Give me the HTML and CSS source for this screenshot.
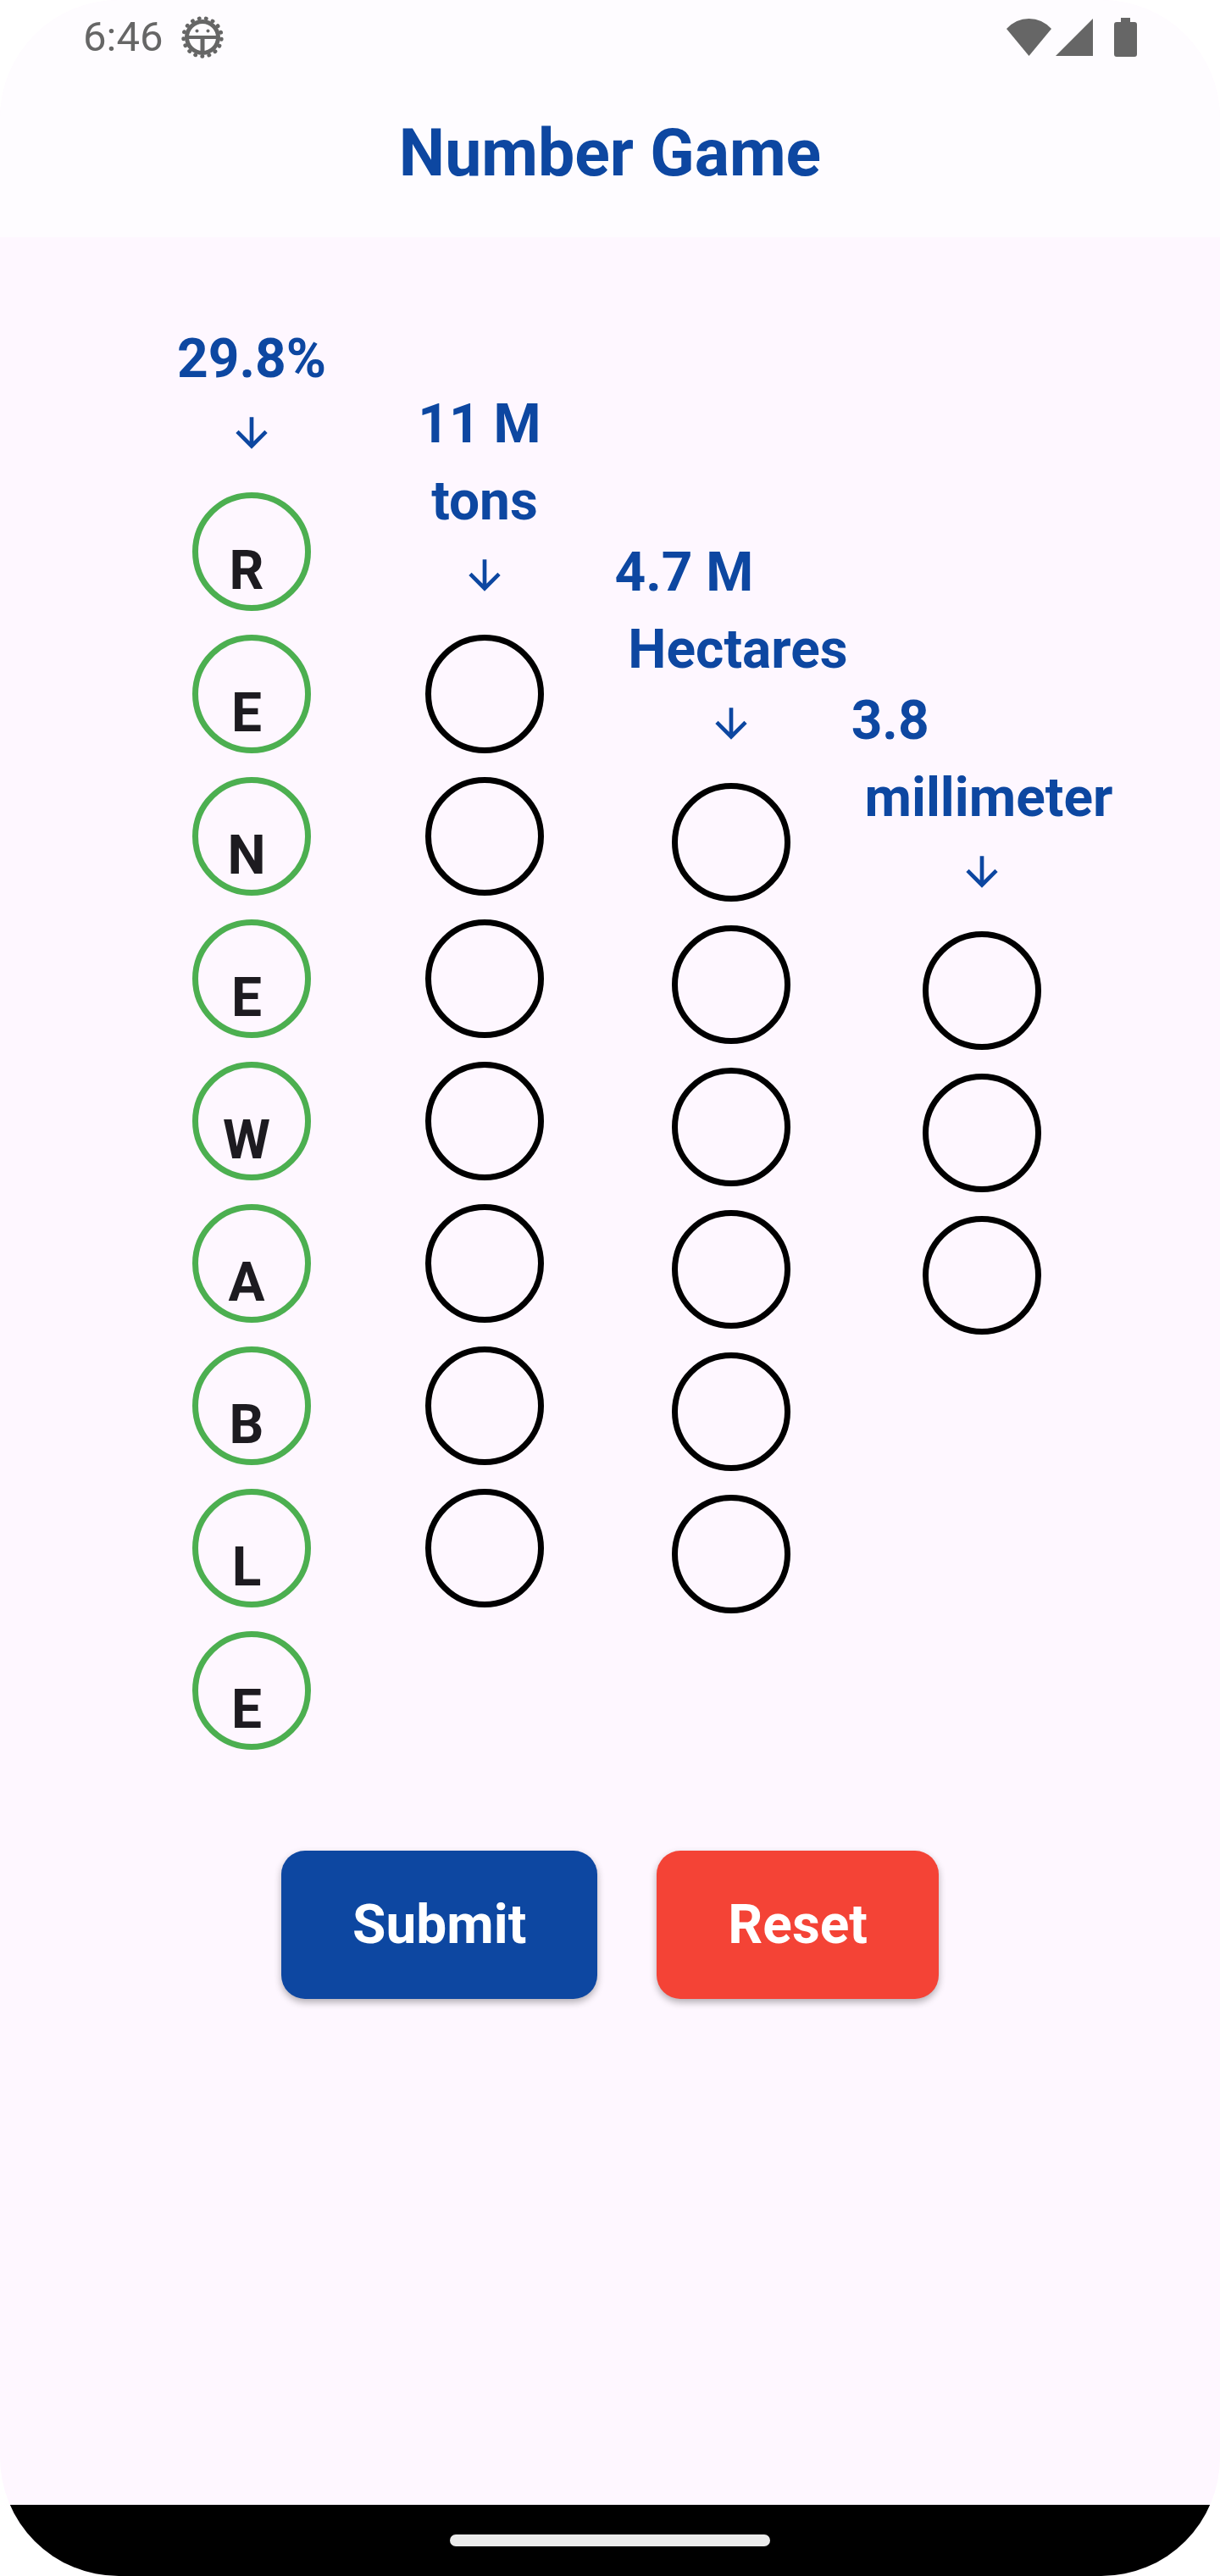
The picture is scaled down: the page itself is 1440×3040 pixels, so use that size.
FILE: index.html
```html
<!DOCTYPE html>
<html lang="en">
<head>
<meta charset="utf-8">
<meta name="viewport" content="width=device-width, initial-scale=1">
<title>Number Game</title>
<link rel="stylesheet" href="styles.css">
</head>
<body>
<div class="screen">
  <header class="top">
    <div class="status">
      <span class="clock">6:46</span>
      <svg class="gear" viewBox="0 0 50 50" aria-hidden="true">
        <circle cx="25" cy="25" r="18.500" fill="none" stroke="currentColor" stroke-width="5"/>
        <circle cx="25" cy="25" r="22.500" fill="none" stroke="currentColor" stroke-width="4.500" stroke-linecap="round" pathLength="170" stroke-dasharray="0.600 9.400" transform="rotate(90 25 25)"/>
        <path d="M9 23h32v4H27.500v15h-5V27H9z" fill="currentColor"/>
        <circle cx="18.500" cy="17.500" r="2" fill="currentColor"/>
        <circle cx="31.500" cy="17.500" r="2" fill="currentColor"/>
      </svg>
      <span class="spacer"></span>
      <svg class="wifi" viewBox="0 0 53 44" aria-hidden="true"><path d="M0 12Q11 0 26.500 0T53 12L26.500 44z" fill="currentColor"/></svg>
      <svg class="signal" viewBox="0 0 44 44" aria-hidden="true"><path d="M44 0v44H0z" fill="currentColor"/></svg>
      <svg class="battery" viewBox="0 0 27 46" aria-hidden="true"><path d="M8 0h11v5h5q3 0 3 3v35q0 3-3 3H3q-3 0-3-3V8q0-3 3-3h5z" fill="currentColor"/></svg>
    </div>
    <h1 class="title">Number Game</h1>
  </header>

  <main class="game">
    <form class="form">
      <div class="board">
        <section class="column">
          <h2 class="clue">29.8%</h2>
          <svg class="arrow" viewBox="0 0 24 24" aria-hidden="true"><path d="M20 12l-1.410-1.410L13 16.170V4h-2v12.170l-5.580-5.590L4 12l8 8z" fill="currentColor"/></svg>
          <div class="cells">
            <input class="cell correct" type="text" maxlength="1" aria-label="29.8%, letter 1" value="R">
            <input class="cell correct" type="text" maxlength="1" aria-label="29.8%, letter 2" value="E">
            <input class="cell correct" type="text" maxlength="1" aria-label="29.8%, letter 3" value="N">
            <input class="cell correct" type="text" maxlength="1" aria-label="29.8%, letter 4" value="E">
            <input class="cell correct" type="text" maxlength="1" aria-label="29.8%, letter 5" value="W">
            <input class="cell correct" type="text" maxlength="1" aria-label="29.8%, letter 6" value="A">
            <input class="cell correct" type="text" maxlength="1" aria-label="29.8%, letter 7" value="B">
            <input class="cell correct" type="text" maxlength="1" aria-label="29.8%, letter 8" value="L">
            <input class="cell correct" type="text" maxlength="1" aria-label="29.8%, letter 9" value="E">
          </div>
        </section>
        <section class="column second">
          <h2 class="clue">11 M
 tons </h2>
          <svg class="arrow" viewBox="0 0 24 24" aria-hidden="true"><path d="M20 12l-1.410-1.410L13 16.170V4h-2v12.170l-5.580-5.590L4 12l8 8z" fill="currentColor"/></svg>
          <div class="cells">
            <input class="cell" type="text" maxlength="1" aria-label="11 M tons, letter 1">
            <input class="cell" type="text" maxlength="1" aria-label="11 M tons, letter 2">
            <input class="cell" type="text" maxlength="1" aria-label="11 M tons, letter 3">
            <input class="cell" type="text" maxlength="1" aria-label="11 M tons, letter 4">
            <input class="cell" type="text" maxlength="1" aria-label="11 M tons, letter 5">
            <input class="cell" type="text" maxlength="1" aria-label="11 M tons, letter 6">
            <input class="cell" type="text" maxlength="1" aria-label="11 M tons, letter 7">
          </div>
        </section>
        <section class="column third">
          <h2 class="clue">4.7 M
 Hectares</h2>
          <svg class="arrow" viewBox="0 0 24 24" aria-hidden="true"><path d="M20 12l-1.410-1.410L13 16.170V4h-2v12.170l-5.580-5.590L4 12l8 8z" fill="currentColor"/></svg>
          <div class="cells">
            <input class="cell" type="text" maxlength="1" aria-label="4.7 M Hectares, letter 1">
            <input class="cell" type="text" maxlength="1" aria-label="4.7 M Hectares, letter 2">
            <input class="cell" type="text" maxlength="1" aria-label="4.7 M Hectares, letter 3">
            <input class="cell" type="text" maxlength="1" aria-label="4.7 M Hectares, letter 4">
            <input class="cell" type="text" maxlength="1" aria-label="4.7 M Hectares, letter 5">
            <input class="cell" type="text" maxlength="1" aria-label="4.7 M Hectares, letter 6">
          </div>
        </section>
        <section class="column fourth">
          <h2 class="clue">3.8
 millimeter</h2>
          <svg class="arrow" viewBox="0 0 24 24" aria-hidden="true"><path d="M20 12l-1.410-1.410L13 16.170V4h-2v12.170l-5.580-5.590L4 12l8 8z" fill="currentColor"/></svg>
          <div class="cells">
            <input class="cell" type="text" maxlength="1" aria-label="3.8 millimeter, letter 1">
            <input class="cell" type="text" maxlength="1" aria-label="3.8 millimeter, letter 2">
            <input class="cell" type="text" maxlength="1" aria-label="3.8 millimeter, letter 3">
          </div>
        </section>
      </div>
      <div class="actions">
        <button class="button submit" type="button">Submit</button>
        <button class="button reset" type="button">Reset</button>
      </div>
    </form>
  </main>

  <footer class="navbar"><span class="handle"></span></footer>
</div>
</body>
</html>
```
FILE: styles.css
```css
* {
  box-sizing: border-box;
}

body {
  margin: 0;
  background: #ffffff;
  font-family: Roboto, "Liberation Sans", sans-serif;
}

.screen {
  display: flex;
  flex-direction: column;
  min-height: 100vh;
  overflow: hidden;
  border-radius: 140px;
  background: #fef7ff;
}

.top {
  background: #fefcff;
  padding-bottom: 54px;
}

.status {
  display: flex;
  align-items: center;
  height: 88px;
  padding: 0 98px;
  color: #666666;
}

.clock {
  font-size: 49px;
  line-height: 56px;
}

.gear {
  width: 50px;
  height: 50px;
  margin-left: 22px;
}

.spacer {
  flex: 1;
}

.wifi {
  width: 53px;
  height: 44px;
}

.signal {
  width: 44px;
  height: 44px;
  margin-left: 5px;
}

.battery {
  width: 27px;
  height: 46px;
  margin-left: 25px;
}

.title {
  margin: 0;
  padding-top: 48px;
  color: #0d47a1;
  font-size: 77px;
  font-weight: 700;
  line-height: 90px;
  text-align: center;
}

.game {
  flex: 1;
  padding: 98px 124px 56px 174px;
}

.board {
  display: grid;
  grid-template-columns: 246fr 304fr 278fr 314fr;
}

.column {
  display: flex;
  flex-direction: column;
  align-items: center;
  color: #0d47a1;
}

.second {
  margin-top: 77px;
}

.third {
  margin-top: 252px;
}

.fourth {
  margin-top: 427px;
}

.clue {
  margin: 0;
  font-size: 64px;
  font-weight: 700;
  line-height: 91px;
  white-space: pre;
}

.arrow {
  width: 56px;
  height: 56px;
  margin: 14px 0 42px;
}

.cells {
  display: flex;
  flex-direction: column;
  gap: 28px;
}

.cell {
  width: 140px;
  height: 140px;
  padding: 44px 12px 0 0;
  border: 7px solid #000000;
  border-radius: 50%;
  background: transparent;
  color: #1d1b20;
  font-family: inherit;
  font-size: 64px;
  font-weight: 700;
  text-align: center;
}

.correct {
  border-color: #4caf50;
}

.actions {
  display: flex;
  justify-content: center;
  gap: 70px;
  margin: 119px 0 0 -50px;
}

.button {
  height: 175px;
  padding: 0 84px;
  border: 0;
  border-radius: 28px;
  box-shadow: 0 4px 8px rgba(0, 0, 0, 0.3);
  color: #ffffff;
  font-family: inherit;
  font-size: 64px;
  font-weight: 700;
}

.submit {
  background: #0d47a1;
}

.reset {
  background: #f44336;
}

.navbar {
  display: flex;
  align-items: center;
  justify-content: center;
  height: 84px;
  background: #000000;
}

.handle {
  width: 378px;
  height: 14px;
  border-radius: 7px;
  background: #ebebeb;
}
```
